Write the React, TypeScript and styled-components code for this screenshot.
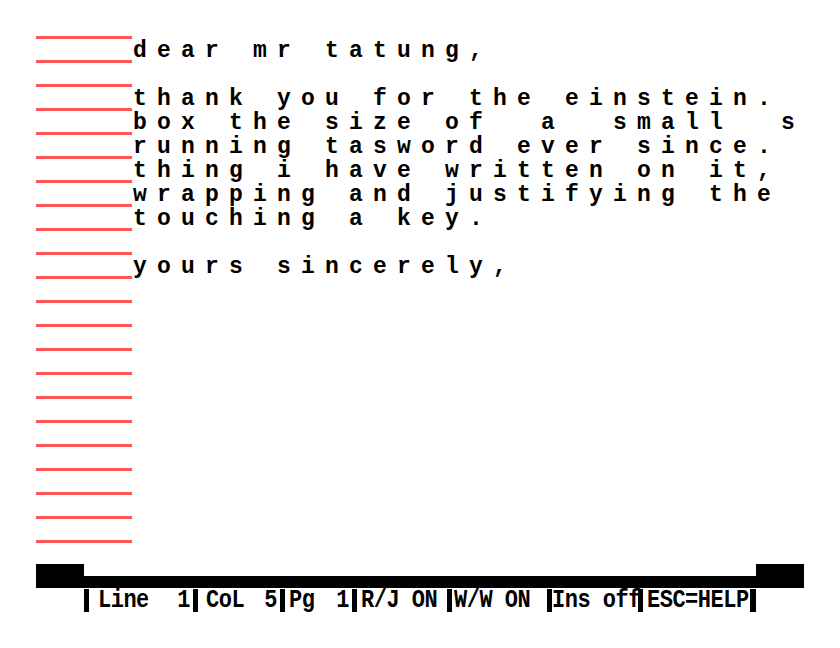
import styled, { createGlobalStyle } from "styled-components";

const GlobalStyle = createGlobalStyle`
  html, body {
    margin: 0;
    padding: 0;
    background: #ffffff;
  }
`;

const Screen = styled.div`
  width: 768px;
  padding: 15px 0 0 36px;
`;

const Page = styled.div`
  display: flex;
  flex-direction: column;
`;

const Row = styled.div`
  display: grid;
  grid-template-columns: 96px 1fr;
  height: 24px;
`;

const Margin = styled.div`
  box-sizing: border-box;
  height: 24px;
  border-bottom: 3px solid #ff5555;
`;

const Line = styled.div`
  font-family: "Liberation Mono", monospace;
  font-weight: bold;
  font-size: 23px;
  line-height: 24px;
  letter-spacing: 10.2px;
  white-space: pre;
  padding-left: 1px;
  color: #000;
`;

const Frame = styled.div`
  display: flex;
  align-items: flex-end;
  height: 24px;
  margin-top: 21px;
`;

const Block = styled.div`
  width: 48px;
  height: 24px;
  background: #000;
`;

const Rule = styled.div`
  flex: 1;
  height: 12px;
  background: #000;
`;

const Status = styled.div`
  display: flex;
  width: 672px;
  height: 23px;
  margin: 1px 0 0 48px;
`;

const Cell = styled.div<{ $w: number; $pad: number }>`
  box-sizing: border-box;
  width: ${(p) => p.$w}px;
  height: 23px;
  border-left: 5px solid #000;
  padding: 0 3px 0 ${(p) => p.$pad}px;
  display: flex;
  justify-content: space-between;
  align-items: center;
`;

const Label = styled.span`
  display: inline-block;
  font-family: "Liberation Mono", monospace;
  font-weight: bold;
  font-size: 22px;
  line-height: 23px;
  letter-spacing: -0.5px;
  white-space: pre;
  color: #000;
  transform: scaleY(1.2);
  transform-origin: 50% 60%;
`;

const EndBar = styled.div`
  width: 6px;
  height: 23px;
  background: #000;
`;

const rows = [
  "",
  "dear mr tatung,",
  "",
  "thank you for the einstein.",
  "box the size of  a  small  s",
  "running tasword ever since.",
  "thing i have written on it,",
  "wrapping and justifying the",
  "touching a key.",
  "",
  "yours sincerely,",
  "",
  "",
  "",
  "",
  "",
  "",
  "",
  "",
  "",
  "",
  "",
];

const cells = [
  { w: 109, pad: 9, label: "Line", value: "1" },
  { w: 87, pad: 8, label: "CoL", value: "5" },
  { w: 72, pad: 4, label: "Pg", value: "1" },
  { w: 95, pad: 4, label: "R/J ON", value: "" },
  { w: 100, pad: 2, label: "W/W ON", value: "" },
  { w: 91, pad: 0, label: "Ins off", value: "" },
  { w: 112, pad: 4, label: "ESC=HELP", value: "" },
];

export default function App() {
  return (
    <>
      <GlobalStyle />
      <Screen>
        <Page>
          {rows.map((text, i) => (
            <Row key={i}>
              <Margin />
              <Line>{text}</Line>
            </Row>
          ))}
        </Page>
        <Frame>
          <Block />
          <Rule />
          <Block />
        </Frame>
        <Status>
          {cells.map((c) => (
            <Cell key={c.label} $w={c.w} $pad={c.pad}>
              <Label>{c.label}</Label>
              <Label>{c.value}</Label>
            </Cell>
          ))}
          <EndBar />
        </Status>
      </Screen>
    </>
  );
}
